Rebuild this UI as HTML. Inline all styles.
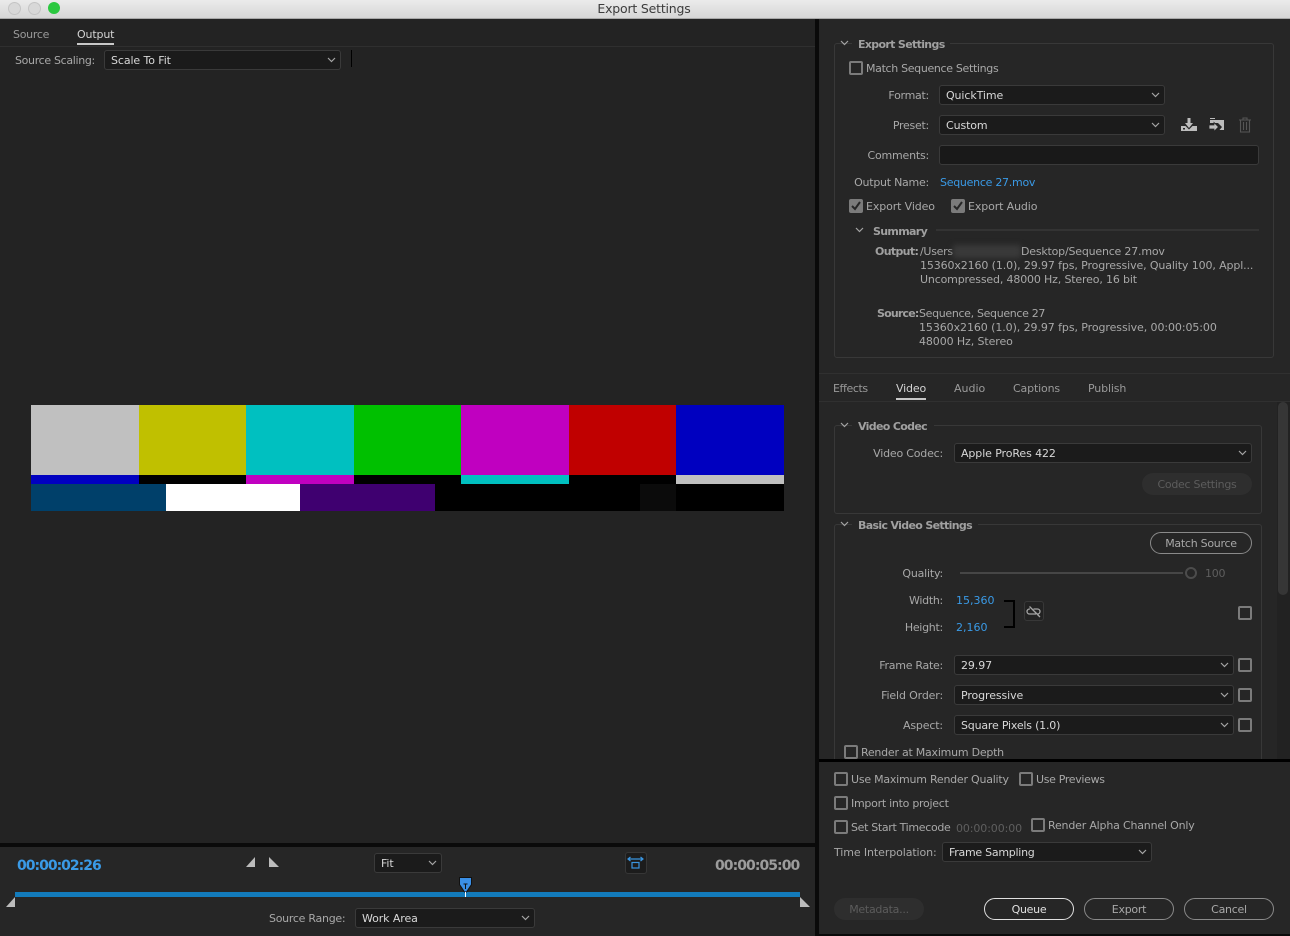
<!DOCTYPE html>
<html><head><meta charset="utf-8"><style>
html,body{margin:0;padding:0;background:#000}
#r{position:relative;width:1290px;height:936px;overflow:hidden;background:#0a0a0a;font:11px/14px "DejaVu Sans",sans-serif;color:#a8a8a8;letter-spacing:-.27px}
#r div,#r svg{position:absolute}
.t{white-space:nowrap;margin-top:2px}
.l{white-space:nowrap;text-align:right;margin-top:2px}
.b{color:#a0a0a0;font-weight:bold;letter-spacing:-.66px}
.w{color:#d4d4d4}
.bl{color:#3a9ae6}
.s{background:#1b1b1b;border:1px solid #3a3a3a;border-radius:3px;box-sizing:border-box;height:20px;color:#d8d8d8;padding:3px 6px 0;white-space:nowrap;letter-spacing:-.1px}
.s svg{right:4px;top:6px}
.c{width:14px;height:14px;box-sizing:border-box;border:2px solid #7b7b7b;border-radius:2px}
.ck{width:14px;height:14px;background:#7b7b7b;border-radius:2px}
.p{box-sizing:border-box;border:1px solid #8a8a8a;border-radius:11px;height:22px;text-align:center;line-height:22px;color:#a8a8a8}
.g{border:1px solid #383838;border-radius:3px;box-sizing:border-box}
</style></head><body><div id="r">
<svg width="0" height="0" style="position:absolute"><defs>
<symbol id="v" viewBox="0 0 9 6"><path d="M1 1l3.5 3.5L8 1" fill="none" stroke="#a5a5a5" stroke-width="1.2"/></symbol>
<symbol id="m" viewBox="0 0 14 14"><path d="M3 7l3 3 5-7" fill="none" stroke="#262626" stroke-width="2"/></symbol>
</defs></svg>

<!-- title bar -->
<div style="left:0;top:0;width:1290px;height:18px;background:linear-gradient(#ebebeb,#d6d6d6);border-bottom:1px solid #a8a8a8"></div>
<div style="left:8px;top:2px;width:11px;height:11px;border-radius:50%;background:#d8d8d8;border:1px solid #c4c4c4"></div>
<div style="left:28px;top:2px;width:11px;height:11px;border-radius:50%;background:#d8d8d8;border:1px solid #c4c4c4"></div>
<div style="left:48px;top:2px;width:12px;height:12px;border-radius:50%;background:#2bc840"></div>
<div class="t" style="left:0;width:1288px;text-align:center;top:0;font-size:12.5px;color:#3c3c3c;letter-spacing:-.2px">Export Settings</div>

<!-- left panel -->
<div style="left:0;top:19px;width:815px;height:824px;background:#232323"></div>
<div style="left:0;top:46px;width:815px;height:1px;background:#2f2f2f"></div>
<div class="t" style="left:13px;top:26px;color:#9a9a9a">Source</div>
<div class="t w" style="left:77px;top:26px;letter-spacing:-.15px">Output</div>
<div style="left:77px;top:43px;width:37px;height:2px;background:#c8c8c8"></div>
<div class="t" style="left:15px;top:52px;letter-spacing:-.33px">Source Scaling:</div>
<div class="s" style="left:104px;top:50px;width:237px">Scale To Fit<svg width="9" height="6"><use href="#v"/></svg></div>
<div style="left:351px;top:50px;width:1px;height:17px;background:#000"></div>

<!-- color bars -->
<div style="left:31px;top:405px;width:108px;height:70px;background:#c0c0c0"></div>
<div style="left:139px;top:405px;width:107px;height:70px;background:#c0c000"></div>
<div style="left:246px;top:405px;width:108px;height:70px;background:#00c0c0"></div>
<div style="left:354px;top:405px;width:107px;height:70px;background:#00c000"></div>
<div style="left:461px;top:405px;width:108px;height:70px;background:#c000c0"></div>
<div style="left:569px;top:405px;width:107px;height:70px;background:#c00000"></div>
<div style="left:676px;top:405px;width:108px;height:70px;background:#0000c0"></div>
<div style="left:31px;top:475px;width:753px;height:9px;background:#000"></div>
<div style="left:31px;top:475px;width:108px;height:9px;background:#0000c0"></div>
<div style="left:246px;top:475px;width:108px;height:9px;background:#c000c0"></div>
<div style="left:461px;top:475px;width:108px;height:9px;background:#00c0c0"></div>
<div style="left:676px;top:475px;width:108px;height:9px;background:#c0c0c0"></div>
<div style="left:31px;top:484px;width:135px;height:27px;background:#00406a"></div>
<div style="left:166px;top:484px;width:134px;height:27px;background:#fff"></div>
<div style="left:300px;top:484px;width:135px;height:27px;background:#3f0070"></div>
<div style="left:435px;top:484px;width:349px;height:27px;background:#000"></div>
<div style="left:640px;top:484px;width:36px;height:27px;background:#0b0b0b"></div>

<!-- timeline -->
<div style="left:0;top:847px;width:815px;height:89px;background:#262626"></div>
<div class="t bl" style="left:17px;top:855px;font-size:14px;line-height:18px;font-weight:bold;letter-spacing:-1px">00:00:02:26</div>
<div class="t" style="left:715px;top:855px;font-size:14px;line-height:18px;font-weight:bold;letter-spacing:-.95px;color:#9c9c9c">00:00:05:00</div>
<svg style="left:246px;top:857px" width="9" height="10"><path d="M9 0v10H0z" fill="#bcbcbc"/></svg>
<svg style="left:269px;top:857px" width="10" height="10"><path d="M0 0v10h10z" fill="#bcbcbc"/></svg>
<div class="s" style="left:374px;top:853px;width:68px">Fit<svg width="9" height="6"><use href="#v"/></svg></div>
<div style="left:625px;top:852px;width:22px;height:22px;box-sizing:border-box;background:#1c1c1c;border:1px solid #363636;border-radius:3px"></div>
<svg style="left:627px;top:856px" width="18" height="15"><path d="M1 3h15M3.5 1L1 3l2.5 2M13.5 1L16 3l-2.5 2" fill="none" stroke="#3a95e0" stroke-width="1.2"/><rect x="5" y="6.5" width="7" height="5.5" fill="none" stroke="#3a95e0" stroke-width="1.2"/></svg>
<div style="left:15px;top:892px;width:785px;height:5px;background:#137bbb"></div>
<svg style="left:6px;top:897px" width="9" height="10"><path d="M9 0v10H0z" fill="#bcbcbc"/></svg>
<svg style="left:800px;top:897px" width="10" height="10"><path d="M0 0v10h10z" fill="#bcbcbc"/></svg>
<svg style="left:459px;top:877px" width="13" height="20"><path d="M.5.5h12v7L7.5 15h-2L.5 7.5z" fill="#3a8fe6" stroke="#111"/><path d="M4.5 7h4M6.500 7v5" stroke="#111" fill="none"/><path d="M6.500 15v5" stroke="#fff" fill="none"/></svg>
<div class="t" style="left:269px;top:910px">Source Range:</div>
<div class="s" style="left:355px;top:908px;width:180px">Work Area<svg width="9" height="6"><use href="#v"/></svg></div>

<!-- right panel -->
<div style="left:819px;top:19px;width:471px;height:740px;background:#262626"></div>
<div class="g" style="left:834px;top:43px;width:440px;height:315px"></div>
<div style="left:852px;top:36px;width:98px;height:14px;background:#262626"></div>
<svg style="left:840px;top:40px" width="9" height="6"><use href="#v"/></svg>
<div class="t b" style="left:858px;top:36px">Export Settings</div>
<div class="c" style="left:849px;top:61px"></div>
<div class="t" style="left:866px;top:60px;letter-spacing:-.33px">Match Sequence Settings</div>
<div class="l" style="right:361px;top:87px">Format:</div>
<div class="s" style="left:939px;top:85px;width:226px">QuickTime<svg width="9" height="6"><use href="#v"/></svg></div>
<div class="l" style="right:361px;top:117px">Preset:</div>
<div class="s" style="left:939px;top:115px;width:226px">Custom<svg width="9" height="6"><use href="#v"/></svg></div>
<svg style="left:1180px;top:117px" width="18" height="15"><path d="M1 9h4.500l3.500 3.500L12.500 9H17v5H1z" fill="#bcbcbc"/><path d="M7.500 1h3v5h2.500L9 11 5 6h2.500z" fill="#bcbcbc"/><rect x="3" y="11" width="2" height="1.500" fill="#262626"/></svg>
<svg style="left:1208px;top:117px" width="18" height="17"><path d="M2 1h5v1H2z" fill="#bcbcbc"/><path d="M2 3h14v10h-4.500l2.500-3-4-4H2z" fill="#bcbcbc"/><path d="M1 8h5V5.500l4.500 4.500L6 14.500V12H1z" fill="#bcbcbc" stroke="#262626" stroke-width=".8"/></svg>
<svg style="left:1238px;top:117px" width="14" height="16"><path d="M1 3h12M5 3V1h4v2M2.500 3v12h9V3M5.500 5v8M8.500 5v8" fill="none" stroke="#555" stroke-width="1.100"/></svg>
<div class="l" style="right:361px;top:147px;letter-spacing:-.2px">Comments:</div>
<div class="s" style="left:939px;top:145px;width:320px;background:#191919"></div>
<div class="l" style="right:361px;top:174px;letter-spacing:-.25px">Output Name:</div>
<div class="t bl" style="left:940px;top:174px">Sequence 27.mov</div>
<div class="ck" style="left:849px;top:199px"><svg style="left:0;top:0" width="14" height="14"><use href="#m"/></svg></div>
<div class="t" style="left:866px;top:198px;letter-spacing:-.12px">Export Video</div>
<div class="ck" style="left:951px;top:199px"><svg style="left:0;top:0" width="14" height="14"><use href="#m"/></svg></div>
<div class="t" style="left:968px;top:198px;letter-spacing:-.12px">Export Audio</div>
<svg style="left:855px;top:227px" width="9" height="6"><use href="#v"/></svg>
<div class="t b" style="left:873px;top:223px">Summary</div>
<div style="left:936px;top:229px;width:323px;height:2px;background:#333"></div>
<div class="t b" style="left:875px;top:243px">Output:</div>
<div class="t" style="left:920px;top:243px">/Users</div>
<div style="left:953px;top:245px;width:68px;height:13px;background:#3a3a3a;filter:blur(3px)"></div>
<div class="t" style="left:1021px;top:243px;letter-spacing:-.2px">Desktop/Sequence 27.mov</div>
<div class="t" style="left:920px;top:257px;letter-spacing:-.12px">15360x2160 (1.0), 29.97 fps, Progressive, Quality 100, Appl...</div>
<div class="t" style="left:920px;top:271px;letter-spacing:-.16px">Uncompressed, 48000 Hz, Stereo, 16 bit</div>
<div class="t b" style="left:877px;top:305px;letter-spacing:-.8px">Source:</div>
<div class="t" style="left:919px;top:305px;letter-spacing:-.33px">Sequence, Sequence 27</div>
<div class="t" style="left:919px;top:319px;letter-spacing:-.08px">15360x2160 (1.0), 29.97 fps, Progressive, 00:00:05:00</div>
<div class="t" style="left:919px;top:333px;letter-spacing:-.1px">48000 Hz, Stereo</div>

<!-- tabs -->
<div style="left:819px;top:373px;width:471px;height:1px;background:#303030"></div>
<div style="left:819px;top:401px;width:471px;height:1px;background:#303030"></div>
<div class="t" style="left:833px;top:380px;color:#9a9a9a;letter-spacing:-.4px">Effects</div>
<div class="t w" style="left:896px;top:380px;letter-spacing:-.15px">Video</div>
<div style="left:896px;top:398px;width:30px;height:2px;background:#c8c8c8"></div>
<div class="t" style="left:954px;top:380px;color:#9a9a9a;letter-spacing:0">Audio</div>
<div class="t" style="left:1013px;top:380px;color:#9a9a9a;letter-spacing:-.15px">Captions</div>
<div class="t" style="left:1088px;top:380px;color:#9a9a9a;letter-spacing:-.15px">Publish</div>

<!-- scrollbar -->
<div style="left:1277px;top:402px;width:13px;height:357px;background:#222"></div>
<div style="left:1278px;top:402px;width:10px;height:193px;background:#363636;border-radius:5px"></div>

<!-- video codec -->
<div class="g" style="left:834px;top:425px;width:428px;height:89px"></div>
<div style="left:852px;top:418px;width:82px;height:14px;background:#262626"></div>
<svg style="left:840px;top:422px" width="9" height="6"><use href="#v"/></svg>
<div class="t b" style="left:858px;top:418px">Video Codec</div>
<div class="l" style="right:347px;top:445px;letter-spacing:-.2px">Video Codec:</div>
<div class="s" style="left:954px;top:443px;width:298px">Apple ProRes 422<svg width="9" height="6"><use href="#v"/></svg></div>
<div style="left:1142px;top:473px;width:110px;height:22px;border-radius:11px;background:#2e2e2e;color:#5c5c5c;text-align:center;line-height:24px">Codec Settings</div>

<!-- basic video -->
<div class="g" style="left:834px;top:524px;width:428px;height:240px"></div>
<div style="left:852px;top:517px;width:126px;height:14px;background:#262626"></div>
<svg style="left:840px;top:521px" width="9" height="6"><use href="#v"/></svg>
<div class="t b" style="left:858px;top:517px">Basic Video Settings</div>
<div class="p" style="left:1150px;top:532px;width:102px">Match Source</div>
<div class="l" style="right:347px;top:565px;letter-spacing:-.2px">Quality:</div>
<div style="left:960px;top:572px;width:223px;height:2px;background:#464646"></div>
<div style="left:1185px;top:567px;width:12px;height:12px;box-sizing:border-box;border:2px solid #4c4c4c;border-radius:50%"></div>
<div class="t" style="left:1205px;top:565px;color:#5e5e5e">100</div>
<div class="l" style="right:347px;top:592px">Width:</div>
<div class="t bl" style="left:956px;top:592px;letter-spacing:0">15,360</div>
<div class="l" style="right:347px;top:619px">Height:</div>
<div class="t bl" style="left:956px;top:619px;letter-spacing:0">2,160</div>
<svg style="left:1003px;top:600px" width="13" height="28"><path d="M1 1h10v26H1" fill="none" stroke="#000" stroke-width="2"/></svg>
<div style="left:1024px;top:601px;width:20px;height:20px;box-sizing:border-box;background:#222;border:1px solid #383838;border-radius:3px"></div>
<svg style="left:1026px;top:604px" width="16" height="14"><path d="M4 5h-.500a2.500 2.500 0 0 0 0 5H10M7.500 5h4a2.500 2.500 0 0 1 0 5H11M3.500 2.500L14 13" fill="none" stroke="#a5a5a5" stroke-width="1.300"/></svg>
<div class="c" style="left:1238px;top:606px"></div>
<div class="l" style="right:347px;top:657px;letter-spacing:-.27px">Frame Rate:</div>
<div class="s" style="left:954px;top:655px;width:280px">29.97<svg width="9" height="6"><use href="#v"/></svg></div>
<div class="c" style="left:1238px;top:658px"></div>
<div class="l" style="right:347px;top:687px;letter-spacing:-.15px">Field Order:</div>
<div class="s" style="left:954px;top:685px;width:280px">Progressive<svg width="9" height="6"><use href="#v"/></svg></div>
<div class="c" style="left:1238px;top:688px"></div>
<div class="l" style="right:347px;top:717px;letter-spacing:-.15px">Aspect:</div>
<div class="s" style="left:954px;top:715px;width:280px;letter-spacing:-.2px">Square Pixels (1.0)<svg width="9" height="6"><use href="#v"/></svg></div>
<div class="c" style="left:1238px;top:718px"></div>
<div class="c" style="left:844px;top:745px"></div>
<div class="t" style="left:861px;top:744px;letter-spacing:-.24px">Render at Maximum Depth</div>

<!-- bottom -->
<div style="left:819px;top:759px;width:471px;height:3px;background:#000"></div>
<div style="left:819px;top:762px;width:471px;height:172px;background:#262626"></div>
<div class="c" style="left:834px;top:772px"></div>
<div class="t" style="left:851px;top:771px;letter-spacing:-.23px">Use Maximum Render Quality</div>
<div class="c" style="left:1019px;top:772px"></div>
<div class="t" style="left:1036px;top:771px;letter-spacing:-.33px">Use Previews</div>
<div class="c" style="left:834px;top:796px"></div>
<div class="t" style="left:851px;top:795px">Import into project</div>
<div class="c" style="left:834px;top:820px"></div>
<div class="t" style="left:851px;top:819px;letter-spacing:-.33px">Set Start Timecode</div>
<div class="t" style="left:956px;top:820px;color:#5e5e5e;letter-spacing:-.1px">00:00:00:00</div>
<div class="c" style="left:1031px;top:818px"></div>
<div class="t" style="left:1048px;top:817px;letter-spacing:-.19px">Render Alpha Channel Only</div>
<div class="t" style="left:834px;top:844px;letter-spacing:-.1px">Time Interpolation:</div>
<div class="s" style="left:942px;top:842px;width:210px;letter-spacing:-.27px">Frame Sampling<svg width="9" height="6"><use href="#v"/></svg></div>
<div style="left:834px;top:898px;width:90px;height:22px;border-radius:11px;background:#2e2e2e;color:#5c5c5c;text-align:center;line-height:24px">Metadata...</div>
<div class="p" style="left:984px;top:898px;width:90px;border-color:#e0e0e0;color:#e0e0e0">Queue</div>
<div class="p" style="left:1084px;top:898px;width:90px">Export</div>
<div class="p" style="left:1184px;top:898px;width:90px">Cancel</div>
</div></body></html>
